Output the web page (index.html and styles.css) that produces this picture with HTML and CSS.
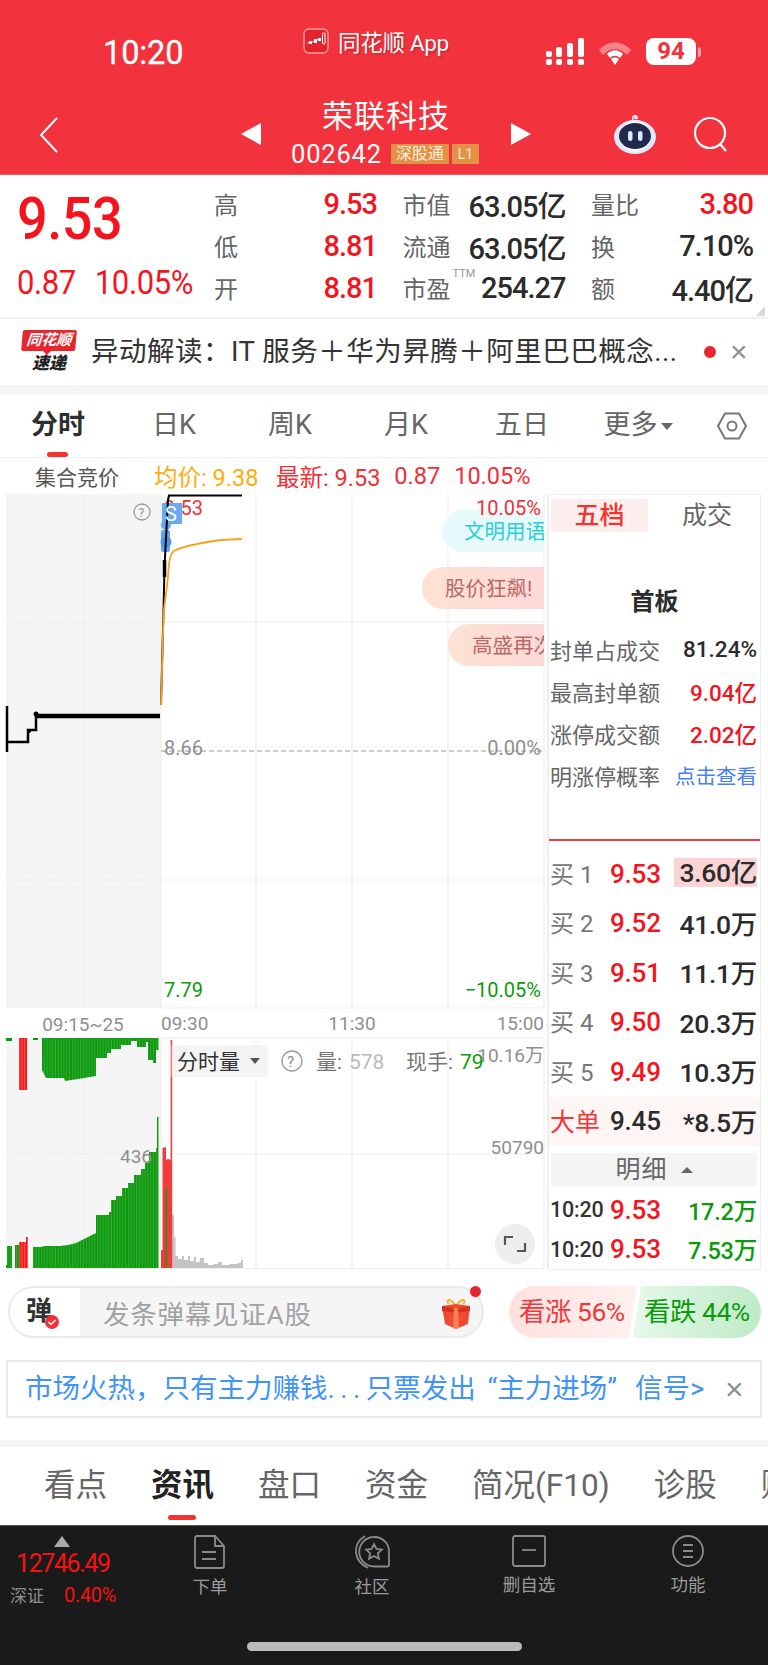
FILE: index.html
```html
<!DOCTYPE html>
<html lang="zh">
<head>
<meta charset="utf-8">
<title>荣联科技</title>
<link rel="stylesheet" href="styles.css">
</head>
<body>
<div class="page">
  <header class="header">
    <div class="status">
      <div class="time">10:20</div>
      <div class="app">
        <svg class="app-logo" viewBox="0 0 26 26"><rect x="1" y="1" width="24" height="24" rx="5" fill="#e5232c" stroke="#fff" stroke-opacity=".55" stroke-width="1.400"/><path d="M4 15l5-1 5-2 4-1" fill="none" stroke="#fff" stroke-width=".8"/><rect x="6" y="13" width="3" height="3" fill="#fff"/><rect x="11" y="11" width="3" height="4" fill="#fff"/><rect x="15" y="10" width="3" height="3" fill="#fff"/><rect x="19.500" y="5" width="2.500" height="11" rx="1" fill="none" stroke="#fff" stroke-width="1"/></svg>
        <span class="app-name">同花顺 App</span>
      </div>
      <div class="sys">
        <svg class="signal" width="38" height="27" viewBox="0 0 38 27" fill="#fff"><rect x="0" y="13" width="6" height="6" rx="2"/><rect x="0" y="21" width="6" height="6" rx="2"/><rect x="10" y="9" width="6" height="10" rx="2"/><rect x="10" y="21" width="6" height="6" rx="2"/><rect x="21" y="5" width="6" height="14" rx="2"/><rect x="21" y="21" width="6" height="6" rx="2"/><rect x="32" y="0" width="6" height="19" rx="2"/><rect x="32" y="21" width="6" height="6" rx="2"/></svg>
        <svg class="wifi" width="34" height="26" viewBox="0 0 34 26"><path d="M1 11C10 1 24 1 33 11l-4 5C22 8 12 8 5 16z" fill="#fff" fill-opacity=".4"/><path d="M9 15c5-5 11-5 16 0l-3 4c-3-3-7-3-10 0z" fill="#fff"/><path d="M13 20c2-2 6-2 8 0l-4 6z" fill="#fff"/></svg>
        <div class="battery">94</div><div class="nub"></div>
      </div>
    </div>
    <div class="nav">
      <div class="nav-back"><svg width="20" height="36" viewBox="0 0 20 36"><path d="M18 1L2 18l16 17" fill="none" stroke="#fff" stroke-width="2"/></svg></div>
      <svg width="20" height="22" viewBox="0 0 20 22"><path d="M20 0v22L0 11z" fill="#fff"/></svg>
      <div class="nav-title">
        <div class="stock-name">荣联科技</div>
        <div class="stock-code"><span class="code">002642</span><span class="tag tag-w">深股通</span><span class="tag">L1</span></div>
      </div>
      <svg width="20" height="22" viewBox="0 0 20 22"><path d="M0 0v22l20-11z" fill="#fff"/></svg>
      <svg class="robot" width="44" height="40" viewBox="0 0 44 40"><path d="M20 5c-1-3 1-5 3-4" fill="none" stroke="#e4e6fb" stroke-width="1.600"/><circle cx="23" cy="2.500" r="2" fill="#e4e6fb"/><ellipse cx="22" cy="22" rx="21" ry="17" fill="#e3e5fa"/><circle cx="22" cy="21" r="16" fill="#f6f7ff"/><ellipse cx="22" cy="21" rx="16" ry="13" fill="#1f2a4d"/><rect x="15" y="16" width="4.500" height="10" rx="2.200" fill="#dfe7ff"/><rect x="25" y="16" width="4.500" height="10" rx="2.200" fill="#dfe7ff"/></svg>
      <svg class="search" width="36" height="36" viewBox="0 0 36 36"><circle cx="17" cy="17" r="15" fill="none" stroke="#fff" stroke-width="2.200"/><path d="M27 28l6 7" stroke="#fff" stroke-width="2.200"/></svg>
    </div>
  </header>

  <section class="quote">
    <div class="quote-main">
      <div class="price">9.53</div>
      <div class="change"><span>0.87</span><span>10.05%</span></div>
    </div>
    <div class="stats">
      <div class="stat"><span class="lbl">高</span><span class="val red">9.53</span></div>
      <div class="stat"><span class="lbl">市值</span><span class="val">63.05亿</span></div>
      <div class="stat"><span class="lbl">量比</span><span class="val red">3.80</span></div>
      <div class="stat"><span class="lbl">低</span><span class="val red">8.81</span></div>
      <div class="stat"><span class="lbl">流通</span><span class="val">63.05亿</span></div>
      <div class="stat"><span class="lbl">换</span><span class="val">7.10%</span></div>
      <div class="stat"><span class="lbl">开</span><span class="val red">8.81</span></div>
      <div class="stat"><span class="lbl">市盈<sup class="ttm">TTM</sup></span><span class="val">254.27</span></div>
      <div class="stat"><span class="lbl">额</span><span class="val">4.40亿</span></div>
    </div>
    <div class="corner"></div>
  </section>

  <section class="news">
    <div class="news-logo"><div class="logo-top">同花顺</div><div class="logo-bot">速递</div></div>
    <div class="news-text">异动解读：IT 服务＋华为昇腾＋阿里巴巴概念...</div>
    <div class="news-dot"></div>
    <div class="close">×</div>
  </section>

  <nav class="tabs">
    <div class="tab on">分时<i></i></div>
    <div class="tab">日K</div>
    <div class="tab">周K</div>
    <div class="tab">月K</div>
    <div class="tab">五日</div>
    <div class="tab">更多<b class="caret"></b></div>
    <svg class="hex" width="30" height="28" viewBox="0 0 30 28"><path d="M8 1.500h14l7 12.500-7 12.500H8L1 14z" fill="none" stroke="#777" stroke-width="2" stroke-linejoin="round"/><circle cx="15" cy="14" r="4.500" fill="none" stroke="#777" stroke-width="2"/></svg>
  </nav>

  <div class="info">
    <span class="auction">集合竞价</span>
    <span class="avg">均价: 9.38</span>
    <span class="latest">最新: 9.53</span>
    <span class="latest">0.87</span>
    <span class="latest">10.05%</span>
  </div>

  <div class="market">
    <svg class="chart" width="547" height="776" viewBox="0 494 547 776">
      <defs>
        <pattern id="gs" patternUnits="userSpaceOnUse" width="2.800" height="10"><rect width="2.800" height="10" fill="#4bb04b"/><rect width="2.100" height="10" fill="#0b9a0b"/></pattern>
        <pattern id="rs" patternUnits="userSpaceOnUse" width="2.800" height="10"><rect width="2.800" height="10" fill="#ff6a6a"/><rect width="2.100" height="10" fill="#f31a1a"/></pattern>
        <linearGradient id="bub" x1="0" x2="1"><stop offset="0" stop-color="#fde2d2"/><stop offset="1" stop-color="#fdd8d8"/></linearGradient>
        <clipPath id="plot"><rect x="0" y="494" width="544" height="776"/></clipPath>
      </defs>
      <rect x="6" y="494" width="155" height="514" fill="#f5f5f5"/>
      <path class="dot" d="M84 494V1008M6 622H160M6 880H160"/>
      <path class="grid" d="M161 494V1008M256 494V1008M352 494V1008M448 494V1008M544 494V1008M161 622H544M161 880H544M161 1008H544"/>
      <path class="top-dash" d="M161 493.500H541"/>
      <path class="zero" d="M161 751H544"/>
      <rect x="6" y="1038" width="155" height="230" fill="#f5f5f5"/>
      <path class="dot" d="M84 1038V1268M6 1154H160"/>
      <path class="grid" d="M161 1038V1268M256 1038V1268M352 1038V1268M448 1038V1268M544 1038V1268M161 1154H544M6 1038H544M6 1268.500H544"/>

      <text class="t-lab red-f" x="164" y="515">9.53</text>
      <path class="price-thin" d="M7 706V752M8 742H28V730H36V716"/>
      <path class="price-thick" d="M36 716H160"/>
      <circle cx="36" cy="714" r="2.500" fill="#000"/>
      <circle cx="29" cy="731" r="2" fill="#000"/>
      <rect x="161" y="530" width="9" height="22" rx="2" fill="#5fa5f2"/>
      <circle cx="166" cy="525" r="5" fill="#5fa5f2"/>
      <circle cx="166" cy="542" r="5.500" fill="#4a96ef"/>
      <rect x="162" y="503" width="20" height="21" fill="#6aaaf2"/>
      <path class="price-line" d="M161 705L163.500 610 164.500 567 168 500 169 495.500H242"/>
      <path class="price-bold" d="M164.500 577V560"/>
      <path class="avg-line" d="M161 705L163.600 613 168 577C169 557 171 553 174 551 182 546 200 543 221 540L242 539"/>
      <text class="t-s" x="165" y="521">S</text>
      <circle cx="142" cy="512" r="8" class="q"/>
      <text class="t-q" x="138.500" y="516.500">?</text>

      <path d="M544 510H463a21 21 0 0 0 0 42H544z" fill="#e7f9fb"/>
      <path d="M544 567H443a21 21 0 0 0 0 42H544z" fill="url(#bub)"/>
      <path d="M544 624H469a21 21 0 0 0 0 42H544z" fill="url(#bub)"/>
      <g clip-path="url(#plot)">
        <text class="t-bub cyan-f" x="464" y="539">文明用语</text>
        <text class="t-bub rose-f" x="445" y="596">股价狂飙!</text>
        <text class="t-bub rose-f" x="472" y="653">高盛再次</text>
      </g>
      <text class="t-lab red-f" x="541" y="515" text-anchor="end">10.05%</text>
      <text class="t-lab gray-f" x="164" y="755">8.66</text>
      <text class="t-lab gray-f" x="541" y="755" text-anchor="end">0.00%</text>
      <text class="t-lab green-f" x="164" y="997">7.79</text>
      <text class="t-lab green-f" x="541" y="997" text-anchor="end">−10.05%</text>

      <text class="t-time" x="83" y="1031" text-anchor="middle">09:15~25</text>
      <text class="t-time" x="161" y="1030">09:30</text>
      <text class="t-time" x="352" y="1030" text-anchor="middle">11:30</text>
      <text class="t-time" x="544" y="1030" text-anchor="end">15:00</text>

      <path fill="url(#gs)" d="M42 1038V1070L46 1078H64L65 1081 78 1079 96 1076V1058H107V1053H111V1049H121V1045H131V1041H137V1047H146V1042H148V1060H153V1063H156V1050H158.500V1038Z"/>
      <path fill="#0b9a0b" d="M6 1038H12V1041H6ZM33 1038H38V1040H33Z"/>
      <path fill="url(#rs)" d="M19 1038H27V1090H19Z"/>
      <path fill="url(#gs)" d="M6 1268V1265H7V1246H12V1268ZM15 1268V1245H19V1268ZM33 1268V1247H42L44 1246 60 1246 68 1245 76 1243 84 1239 90 1236 96 1233V1215H109V1212H111V1200H116V1196H122V1188H128V1183H134V1175H141V1169H145V1163H149V1152H156V1148H157V1117H158.500V1268Z"/>
      <path fill="url(#rs)" d="M19 1268V1242H26V1237H28V1268Z"/>
      <path fill="#f23b3b" d="M161 1268V1250H162.500V1148L166 1147V1268ZM166 1268H171V1160L168 1159 166 1160Z"/>
      <path fill="#149b14" d="M165.500 1268V1187H167V1268Z"/>
      <path fill="#c4c4c4" d="M172 1268V1215H174V1237H175.500V1256H178V1259H182V1256H184V1260H188V1256H190V1261H194V1257H196V1262H200V1258H204V1263H208V1265H214V1264H218V1262H222V1265H230V1264H238V1263H241V1260H243V1268Z"/>
      <path d="M171.400 1040V1268" stroke="#f23b3b" stroke-width="1.600"/>

      <rect x="168" y="1045" width="100" height="32" rx="3" fill="#f4f4f4"/>
      <path d="M171.400 1045V1077" stroke="#f23b3b" stroke-opacity=".7" stroke-width="1.400"/>
      <text class="t-vol dark-f" x="177" y="1069">分时量</text>
      <path d="M250 1058h10l-5 6z" fill="#555"/>
      <circle cx="292" cy="1061" r="10" class="q"/>
      <text class="t-q2" x="287" y="1067">?</text>
      <text class="t-vol mid-f" x="316" y="1069">量:</text>
      <text class="t-vol light-f" x="349" y="1069">578</text>
      <text class="t-vol mid-f" x="406" y="1069">现手:</text>
      <text class="t-vol green-f" x="460" y="1069">79</text>
      <text class="t-time" x="544" y="1062" text-anchor="end">10.16万</text>
      <text class="t-time" x="544" y="1154" text-anchor="end">50790</text>
      <text class="t-time" x="120" y="1163">436</text>
      <circle cx="515" cy="1244" r="20" fill="#eeeeee"/>
      <path d="M505 1245v-8h8M525 1243v8h-8" fill="none" stroke="#555" stroke-width="2.200"/>
    </svg>

    <aside class="panel">
      <div class="ptabs"><div class="ptab on">五档</div><div class="ptab">成交</div></div>
      <div class="board">首板</div>
      <div class="brow"><span>封单占成交</span><span class="num dark">81.24%</span></div>
      <div class="brow"><span>最高封单额</span><span class="num red">9.04亿</span></div>
      <div class="brow"><span>涨停成交额</span><span class="num red">2.02亿</span></div>
      <div class="brow"><span>明涨停概率</span><span class="link">点击查看</span></div>
      <div class="rule"></div>
      <div class="buys">
        <div class="buy"><span class="bl">买 1</span><span class="bp">9.53</span><span class="bq hi">3.60亿</span></div>
        <div class="buy"><span class="bl">买 2</span><span class="bp">9.52</span><span class="bq">41.0万</span></div>
        <div class="buy"><span class="bl">买 3</span><span class="bp">9.51</span><span class="bq">11.1万</span></div>
        <div class="buy"><span class="bl">买 4</span><span class="bp">9.50</span><span class="bq">20.3万</span></div>
        <div class="buy"><span class="bl">买 5</span><span class="bp">9.49</span><span class="bq">10.3万</span></div>
        <div class="buy big"><span class="bl">大单</span><span class="bp">9.45</span><span class="bq">*8.5万</span></div>
      </div>
      <div class="detail">明细<b class="up"></b></div>
      <div class="trade"><span class="tt">10:20</span><span class="bp">9.53</span><span class="tv">17.2万</span></div>
      <div class="trade"><span class="tt">10:20</span><span class="bp">9.53</span><span class="tv">7.53万</span></div>
    </aside>
  </div>

  <div class="comment">
    <div class="pill">
      <div class="pill-icon">弹<svg class="check" width="14" height="14" viewBox="0 0 14 14"><circle cx="7" cy="7" r="7" fill="#f0313a"/><path d="M3.500 7l2.500 2.500 4.500-4.500" fill="none" stroke="#fff" stroke-width="1.500"/></svg></div>
      <div class="pill-text">发条弹幕见证A股</div>
      <svg class="gift" width="32" height="32" viewBox="0 0 32 32"><path d="M15 8C10 0 5 3 9 7M17 8c5-8 10-5 6-1" fill="none" stroke="#f4b63a" stroke-width="2"/><path d="M2 9l14-2 14 2-2 18-12 5-11-5z" fill="#ee4b35"/><path d="M2 9l14 3 14-3v5l-14 2-14-2z" fill="#d7321f"/><path d="M14 11h4l1 20-3 1-3-1z" fill="#f77f55"/></svg>
      <div class="pill-dot"></div>
    </div>
    <div class="vote">
      <div class="vote-up">看涨 56%</div>
      <div class="vote-down">看跌 44%</div>
    </div>
  </div>

  <div class="banner">
    <div class="banner-text">市场火热，只有主力赚钱<span class="dots">...</span>只票发出 “主力进场” <span class="sig">信号&gt;</span></div>
    <div class="close">×</div>
  </div>

  <div class="strip"></div>

  <nav class="subtabs">
    <div class="st">看点</div>
    <div class="st on">资讯<i></i></div>
    <div class="st">盘口</div>
    <div class="st">资金</div>
    <div class="st">简况(F10)</div>
    <div class="st">诊股</div>
    <div class="st">财务</div>
  </nav>

  <footer class="bottom">
    <div class="index">
      <div class="idx-up"></div>
      <div class="idx-val">12746.49</div>
      <div class="idx-row"><span class="idx-name">深证</span><span class="idx-pct">0.40%</span></div>
    </div>
    <div class="act a1">
      <svg width="32" height="34" viewBox="0 0 32 34" class="ic"><path d="M3 1h18l9 10v20a2 2 0 0 1-2 2H3a2 2 0 0 1-2-2V3a2 2 0 0 1 2-2zM21 1v10h9M8 17h14M8 24h14"/></svg>
      <span>下单</span>
    </div>
    <div class="act a2">
      <svg width="36" height="34" viewBox="0 0 36 34" class="ic"><path d="M20 2a14.500 14.500 0 0 1 15 15v13a1.500 1.500 0 0 1-1.500 1.500H20A14.750 14.750 0 0 1 20 2z"/><path d="M11 1C-2 9-1 26 14 33"/><path d="M20 9l2.400 5 5.400.7-4 3.700 1.100 5.300-4.900-2.700-4.900 2.700 1.100-5.300-4-3.700 5.400-.7z"/></svg>
      <span>社区</span>
    </div>
    <div class="act a3">
      <svg width="34" height="32" viewBox="0 0 34 32" class="ic"><rect x="1" y="1" width="32" height="30" rx="2"/><path d="M10 15h14"/></svg>
      <span>删自选</span>
    </div>
    <div class="act a4">
      <svg width="32" height="32" viewBox="0 0 32 32" class="ic"><circle cx="16" cy="16" r="15"/><path d="M11 10h10M11 16h10M11 22h10"/></svg>
      <span>功能</span>
    </div>
    <div class="home"></div>
  </footer>
</div>
</body>
</html>
```
FILE: styles.css
```css
* { box-sizing: border-box; }
html, body { margin: 0; padding: 0; background: #fff; }
body { font-family: Roboto, "Noto Sans CJK SC", sans-serif; color: #333; }
.page { width: 768px; height: 1665px; overflow: hidden; position: relative; }
.red { color: #f5141e; }
.dark { color: #2b2b2b; }

/* header */
.header { height: 175px; background: #f2323c; color: #fff; border-bottom: 1px solid #f5555d; }
.status { height: 87px; display: flex; padding-left: 103px; }
.time { width: 200px; font-size: 32.500px; line-height: 34px; margin-top: 36px; font-weight: 400; letter-spacing: -.1px; -webkit-text-stroke: .3px #fff; }
.app { display: flex; align-items: center; height: 30px; margin-top: 26px; width: 243px; }
.app-logo { width: 26px; height: 26px; }
.app-name { margin-left: 9px; font-size: 22.500px; text-shadow: 1px 1px 2px rgba(0,0,0,.25); letter-spacing: -.3px; }
.sys { display: flex; align-items: flex-start; margin-top: 38px; }
.wifi { margin: 1px 0 0 14px; }
.battery { width: 50px; height: 27px; margin-left: 14px; background: #fff; border-radius: 8px; color: #f3323c; font-size: 24px; line-height: 27px; font-weight: 700; text-align: center; }
.nub { width: 3px; height: 10px; margin: 9px 0 0 2px; background: rgba(255,255,255,.55); border-radius: 0 3px 3px 0; }
.nav { height: 87px; display: flex; align-items: flex-start; padding-top: 11px; }
.nav > svg { margin-top: 25px; }
.nav-back { width: 241px; padding: 19px 0 0 39px; }
.nav-title { width: 250px; text-align: center; }
.stock-name { font-size: 31px; line-height: 36px; letter-spacing: 1px; margin-top: 1px; }
.stock-code { display: flex; align-items: center; margin-top: 8px; height: 22px; padding-left: 30px; }
.code { font-size: 25.500px; letter-spacing: .8px; }
.tag { margin-left: 3px; height: 20px; padding: 0 6px; line-height: 20px; font-size: 14px; background: #e39145; color: #fdeedd; }
.tag-w { margin-left: 9px; padding: 0 5px; font-size: 16px; line-height: 19px; }
.nav > .robot { margin: 17px 0 0 82px; }
.nav > .search { margin: 18px 0 0 36px; }

/* quote */
.quote { height: 144px; display: flex; border-bottom: 2px solid #f0f0f0; position: relative; }
.quote-main { width: 215px; padding: 12px 0 0 17px; }
.price { font-size: 54px; line-height: 66px; color: #f5141e; font-weight: 500; letter-spacing: -.5px; transform: scaleY(1.08); transform-origin: left center; }
.change { display: flex; gap: 19px; margin-top: 14px; font-size: 31px; line-height: 34px; color: #f5141e; letter-spacing: -.4px; transform: scaleY(1.05); }
.stats { display: grid; grid-template-columns: 163px 163px 162px; column-gap: 25.500px; grid-auto-rows: 42px; padding-top: 8px; margin-left: -1px; }
.stat { display: flex; justify-content: space-between; align-items: center; }
.lbl { font-size: 24px; color: #666; position: relative; margin-top: -1px; }
.val { font-size: 29px; font-weight: 500; color: #2b2b2b; letter-spacing: -1px; }
.val.red { color: #f5141e; }
.ttm { position: absolute; left: 50px; top: -2px; font-size: 11px; line-height: 12px; color: #999; }
.corner { position: absolute; right: 3px; bottom: 1px; width: 0; height: 0; border-style: solid; border-width: 0 0 10px 9px; border-color: transparent transparent #d8d8d8 transparent; }

/* news */
.news { height: 66px; display: flex; align-items: center; padding-left: 22px; }
.news-logo { width: 54px; height: 44px; }
.logo-top { height: 21px; background: #e8252f; color: #fff; font-size: 15px; line-height: 21px; font-weight: 700; font-style: italic; text-align: center; border-radius: 2px; transform: skewX(-5deg); position: relative; }
.logo-top::after { content: ""; position: absolute; left: 22px; top: 21px; border: 4px solid transparent; border-top: 4px solid #e8252f; border-bottom: 0; }
.logo-bot { margin-top: 2px; color: #222; font-size: 17px; line-height: 21px; font-weight: 900; font-style: italic; text-align: center; }
.news-text { margin-left: 15px; width: 592px; font-size: 27.500px; line-height: 34px; white-space: nowrap; color: #333; letter-spacing: .5px; }
.news-dot { width: 12px; height: 12px; margin-left: 21px; background: #e8252f; border-radius: 50%; }
.close { font-size: 30px; line-height: 30px; color: #8e8e8e; font-family: "Liberation Sans", sans-serif; }
.news .close { margin-left: 14px; }

/* tabs */
.tabs { margin-top: 8px; border-top: 1px solid #f5f5f5; height: 65px; display: flex; background: #fff; border-bottom: 1px solid #efefef; position: relative; }
.tabs::before { content: ""; position: absolute; left: 0; right: 0; top: -9px; height: 8px; background: #f5f5f5; }
.tab { width: 116px; text-align: center; font-size: 27px; line-height: 62px; color: #666; position: relative; }
.tab.on { color: #2e2e2e; font-weight: 700; }
.tab.on i { position: absolute; left: 47px; top: 58px; width: 21px; height: 5px; border-radius: 3px; background: #f5322f; }
.caret { display: inline-block; width: 0; height: 0; margin-left: 3px; vertical-align: 4px; border: 6px solid transparent; border-top: 7px solid #666; border-bottom: 0; }
.hex { margin: 18px 0 0 21px; }

/* info */
.info { height: 36px; display: flex; align-items: center; font-size: 23.500px; white-space: nowrap; }
.auction { width: 154px; padding-left: 35px; font-size: 21px; color: #555; }
.avg { color: #ffab0a; width: 122px; }
.latest { color: #f02f38; margin-right: 14px; }

/* market */
.market { height: 776px; display: flex; }
.chart { display: block; flex: none; }
.dot { fill: none; stroke: #e6e6e6; stroke-width: 1; stroke-dasharray: 1.500 2; }
.grid { fill: none; stroke: #eeeeee; stroke-width: 1.200; }
.top-dash { fill: none; stroke: #d8c4a8; stroke-width: 1; stroke-dasharray: 5 3; }
.zero { fill: none; stroke: #9a9a9a; stroke-width: 1; stroke-dasharray: 5 3; }
.price-thin { fill: none; stroke: #000; stroke-width: 2.500; }
.price-thick { fill: none; stroke: #000; stroke-width: 4.500; }
.price-line { fill: none; stroke: #000; stroke-width: 2; }
.price-bold { fill: none; stroke: #000; stroke-width: 3.500; }
.avg-line { fill: none; stroke: #f8a31e; stroke-width: 1.800; }
.q { fill: none; stroke: #999; stroke-width: 1.300; }
.t-lab, .t-time, .t-vol, .t-bub, .t-s, .t-q, .t-q2 { font-family: Roboto, "Noto Sans CJK SC", sans-serif; }
.t-lab { font-size: 20px; }
.red-f { fill: #f02f38; }
.gray-f { fill: #8f8f8f; }
.green-f { fill: #0b9a0b; }
.cyan-f { fill: #2bcfdc; }
.rose-f { fill: #b86a66; }
.dark-f { fill: #333; }
.mid-f { fill: #777; }
.light-f { fill: #bbb; }
.t-s { font-size: 20px; fill: #fff; }
.t-q { font-size: 12px; fill: #999; }
.t-q2 { font-size: 15px; fill: #888; }
.t-bub { font-size: 20.500px; }
.t-time { font-size: 19px; fill: #8f8f8f; }
.t-vol { font-size: 21px; }

/* panel */
.panel { width: 214px; height: 776px; border: 1px solid #eeeeee; border-width: 1px 1px 1px 2px; font-size: 22px; color: #666; padding-top: 4px; }
.ptabs { display: flex; height: 33px; padding-left: 2px; }
.ptab { width: 97px; line-height: 33px; text-align: center; font-size: 25px; border-radius: 3px; margin-right: 14px; }
.ptab + .ptab { width: 90px; margin: 0; }
.ptab.on { background: #fdeeee; color: #f5322f; font-weight: 500; }
.board { margin-top: 56px; height: 28px; line-height: 28px; text-align: center; font-size: 24px; font-weight: 700; color: #2b2b2b; }
.brow { height: 42px; display: flex; justify-content: space-between; align-items: center; padding: 0 3px 0 1px; white-space: nowrap; }
.board + .brow { margin-top: 12px; }
.num { font-size: 22.500px; font-weight: 500; }
.link { color: #4a80f0; font-size: 20.500px; }
.rule { height: 2px; margin-top: 43px; background: #ef3b3b; }
.buys { padding-top: 8px; }
.buy { height: 49.500px; display: flex; align-items: center; padding: 0 3px 0 1px; font-size: 24px; }
.bl { width: 60px; color: #777; font-size: 24px; white-space: nowrap; margin-top: -3px; }
.bp { width: 54px; font-size: 26px; font-weight: 500; color: #f5141e; letter-spacing: -.2px; }
.bq { margin-left: auto; font-size: 26.500px; color: #2b2b2b; font-weight: 500; letter-spacing: -.3px; white-space: nowrap; margin-top: -2px; }
.bq.hi { width: 83px; height: 29px; line-height: 29px; background: #fbd5d5; text-align: right; }
.big { background: #fef5f5; }
.big .bl { color: #f0383c; font-size: 25px; }
.big .bp { color: #2b2b2b; }
.detail { margin: 7px 3px 4px 2px; height: 33px; background: #f4f4f4; color: #666; font-size: 25px; line-height: 33px; text-align: center; letter-spacing: 1px; }
.up { display: inline-block; width: 0; height: 0; margin-left: 13px; vertical-align: 5px; border: 6px solid transparent; border-bottom: 6px solid #666; border-top: 0; }
.trade { height: 39.500px; display: flex; align-items: center; padding: 0 3px 0 1px; }
.tt { width: 60px; font-size: 21.500px; color: #333; font-weight: 500; letter-spacing: -.2px; }
.tv { margin-left: auto; color: #0b9a0b; font-size: 23.500px; font-weight: 500; letter-spacing: -.2px; white-space: nowrap; }

/* comment */
.comment { height: 90px; padding: 16px 7px 0 8px; display: flex; justify-content: space-between; }
.pill { width: 476px; height: 52px; border: 2px solid #eaeaea; border-radius: 26px; background: #f5f5f5; display: flex; align-items: center; position: relative; overflow: visible; }
.pill-icon { width: 70px; height: 48px; background: #fff; border-radius: 24px 0 0 24px; line-height: 46px; padding-left: 16px; font-size: 26px; font-weight: 700; color: #333; position: relative; }
.check { position: absolute; left: 35px; top: 27px; }
.pill-text { margin-left: 23px; font-size: 26.500px; color: #a2a2a2; width: 280px; letter-spacing: .75px; }
.gift { position: absolute; left: 430px; top: 9px; }
.pill-dot { position: absolute; left: 460px; top: -2px; width: 11px; height: 11px; background: #e8252f; border-radius: 50%; }
.vote { width: 252px; height: 52px; display: flex; font-size: 26.500px; line-height: 52px; margin-left: 25px; position: relative; }
.vote-up { width: 128px; padding-left: 10px; border-radius: 26px 0 0 26px; background: linear-gradient(90deg, #ffe1df, #fff1ef); color: #f0383c; clip-path: polygon(0 0, 100% 0, calc(100% - 8px) 100%, 0 100%); white-space: nowrap; letter-spacing: -.5px; }
.vote-down { width: 128px; margin-left: -4px; padding-left: 11px; border-radius: 0 26px 26px 0; background: linear-gradient(90deg, #e7f8ea, #bdebc6); color: #0b9a0b; clip-path: polygon(8px 0, 100% 0, 100% 100%, 0 100%); white-space: nowrap; letter-spacing: -.5px; }

/* banner */
.banner { margin: 0 6px; height: 58px; border: 2px solid #e8e8e8; display: flex; align-items: center; padding-left: 17px; }
.banner-text { width: 697px; font-size: 27.500px; line-height: 36px; color: #3f94f5; white-space: nowrap; word-spacing: 5px; }
.dots { letter-spacing: 5.500px; }
.sig { margin-left: 6px; }
.banner .close { margin-left: 3px; font-size: 32px; }
.strip { margin-top: 22px; height: 7px; background: #f5f5f5; }

/* sub tabs */
.subtabs { height: 78px; display: flex; white-space: nowrap; overflow: hidden; padding-left: 44px; }
.st { font-size: 31.500px; line-height: 78px; color: #666; margin-right: 44px; position: relative; flex: none; }
.st.on { color: #222; font-weight: 700; }
.st.on i { position: absolute; left: 17px; top: 68px; width: 28px; height: 5px; border-radius: 3px; background: #f5322f; }

/* bottom */
.bottom { height: 140px; background: #1a1a1a; border-top: 1px solid #555; position: relative; display: flex; }
.index { width: 195px; padding-left: 10px; }
.idx-up { width: 0; height: 0; margin: 10px 0 0 44px; border: 8px solid transparent; border-bottom: 11px solid #aaa; border-top: 0; }
.idx-val { margin: 1px 0 0 6px; font-size: 25px; line-height: 32px; color: #f51212; letter-spacing: -1.400px; }
.idx-row { display: flex; align-items: center; margin-top: 2px; }
.idx-name { width: 54px; font-size: 17px; color: #8e8e8e; }
.idx-pct { font-size: 20px; color: #f51212; letter-spacing: -.3px; }
.act { display: flex; flex-direction: column; align-items: center; padding-top: 9px; font-size: 17.500px; color: #9a9a9a; width: 90px; }
.act span { margin-top: 6px; line-height: 24px; }
.ic { fill: none; stroke: #8a8a8a; stroke-width: 1.800; }
.a1 { margin-left: -30px; }
.a2 { margin-left: 72px; }
.a3 { margin-left: 67px; }
.a4 { margin-left: 69px; }
.home { position: absolute; left: 247px; top: 116px; width: 275px; height: 9px; border-radius: 5px; background: #bbbbbb; }
```
